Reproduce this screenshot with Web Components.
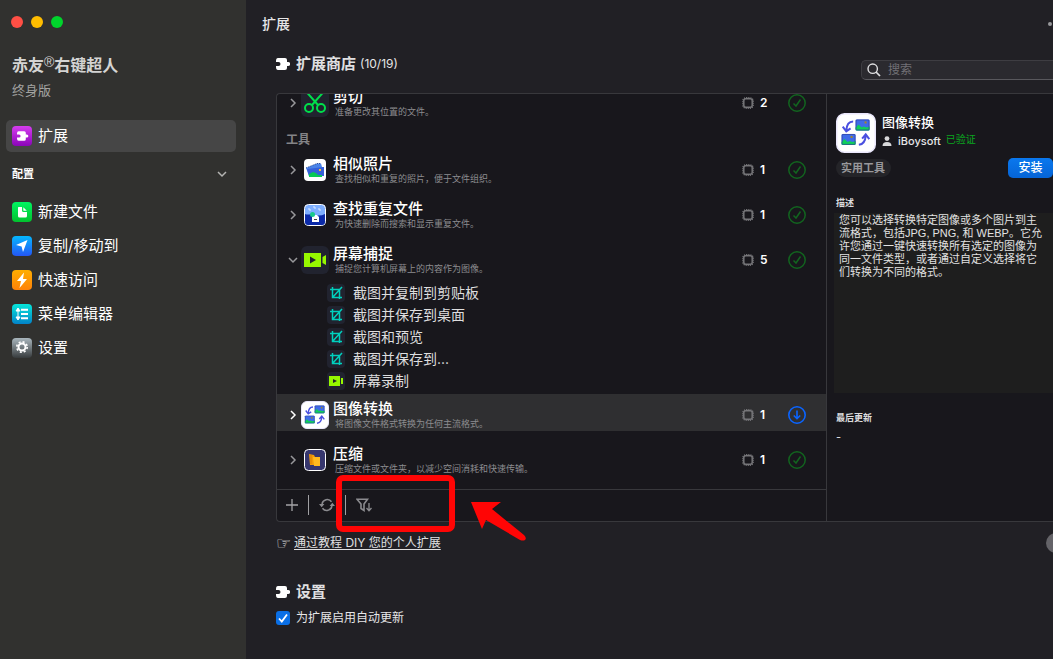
<!DOCTYPE html>
<html lang="zh-CN">
<head>
<meta charset="utf-8">
<title>扩展</title>
<style>
  html, body { margin: 0; height: 100%; }
  body {
    background: #212025;
    color: #e6e6e8;
    font-family: Inter, "Noto Sans CJK SC", sans-serif;
    font-size: 14px;
    overflow: hidden;
  }
</style>
</head>
<body>
<app-window></app-window>
<script>
const define = (name, markup, setup) => {
  const template = document.createElement('template');
  template.innerHTML = markup;
  customElements.define(name, class extends HTMLElement {
    constructor() {
      super();
      this.attachShadow({ mode: 'open' }).append(template.content.cloneNode(true));
    }
    connectedCallback() { if (setup) setup(this, this.shadowRoot); }
  });
};

/* A small landscape photo used inside the image tool icons. */
const photo = (x, y) => `<g transform="translate(${x} ${y})"><rect width="14" height="11" rx="1" fill="#3f6be8"/><path d="M0 8l3-3 3 3 2-1 3 1 3-1v3a1 1 0 0 1-1 1H1a1 1 0 0 1-1-1z" fill="#0fcf5b"/><rect x="9" y="2" width="2" height="2" fill="#a88620"/><rect x=".5" y=".5" width="13" height="10" rx="1" fill="none" stroke="#2f3f9c" stroke-width=".7"/></g>`;
const tile = (id, a, b, art) => ['0 0 20 20', `<defs><linearGradient id="${id}" x2="0" y2="1"><stop stop-color="${a}"/><stop offset="1" stop-color="${b}"/></linearGradient></defs><rect width="20" height="20" rx="4" fill="url(#${id})"/>${art}`];
const puzzle = 'M0 3q0-3 2-3h7q2 0 2 2v2h1.200a2 2 0 0 1 0 4H11v2q0 2-2 2H2q-2 0-2-3V8h2.500a2 2 0 0 0 0-4H0z';

const icons = {
  puzzle: ['0 0 14 12', `<path d="${puzzle}" fill="#fff"/>`],
  extend: tile('g', '#d63df0', '#8a05b8', `<path d="${puzzle}" transform="translate(5 5.200) scale(.8)" fill="#fff"/>`),
  newfile: tile('g', '#00f562', '#02c22e', '<path d="M6.500 5h3.500v3.500q0 1.500 1.500 1.500H15v4q0 1.500-1.500 1.500h-6Q6 15.500 6 14V5.500z" fill="#fff"/><path d="M11.300 5.200L14.800 8.800h-3q-.5 0-.5-.5z" fill="#fff"/>'),
  send: tile('g', '#05b8ff', '#2456f5', '<path d="M15.500 4L11 16 9.600 10.600 4 9z" fill="#fff"/>'),
  bolt: tile('g', '#ffae00', '#ff8208', '<path d="M12 2.500L5 11h4L7.500 18 15 9h-4z" fill="#fff"/>'),
  menu: tile('g', '#06e6da', '#0383c9', '<path d="M9 5.800h7M9 10h7M9 14.200h7" stroke="#fff" stroke-width="2"/><path d="M6 5v10M4 7l2-3 2 3zM4 13l2 3 2-3z" stroke="#fff" fill="#fff"/>'),
  gear: tile('g', '#a9b6bd', '#373b3d', '<circle cx="10" cy="9" r="3.500" fill="none" stroke="#fff" stroke-width="2"/><circle cx="10" cy="9" r="5.200" fill="none" stroke="#fff" stroke-width="1.600" stroke-dasharray="2.040 2.040"/>'),
  right: ['0 0 12 12', '<path d="M4 2l4 4-4 4" fill="none" stroke="currentColor" stroke-width="1.500"/>'],
  down: ['0 0 12 12', '<path d="M2 4l4 4 4-4" fill="none" stroke="currentColor" stroke-width="1.500"/>'],
  scissors: ['0 0 28 28', '<rect width="28" height="28" rx="6" fill="#21232f"/><g fill="none" stroke="#00df4b" stroke-width="2"><circle cx="8" cy="19" r="4"/><circle cx="20" cy="19" r="4"/><path d="M5.500 3l11.500 13M22.500 3L11 16"/></g>'],
  photos: ['0 0 28 28', '<rect x="3" y="3" width="22" height="22" rx="4" fill="#fff"/><path d="M5 12l11-4.500 4 0 1 3.500 2 0v9H8z" fill="#4a83e8"/><path d="M6 13l17-2v9H8z" fill="#3660d8"/><path d="M8 18l4-2 3 1 2 2 4 0v2H8z" fill="#07c954"/><path d="M5 12l11-4.500h4" fill="none" stroke="#1f3f90" stroke-dasharray="1 1"/><rect x="18" y="13" width="2" height="2" fill="#ffc12c"/>'],
  duplicate: ['0 0 28 28', '<rect x="3.500" y="3.500" width="21" height="21" rx="4" fill="#7daeff" stroke="#fff"/><path d="M4 13q3 1 6 0 8 3 14 0v8q0 3-3 3H7q-3 0-3-3z" fill="#0b2aa8"/><path d="M11 14h5l2 2v5h-7z" fill="#fff"/><path d="M13 18.500h3" stroke="#444"/><circle cx="11.500" cy="13.500" r="2.500" fill="#19c88a"/><path d="M8 7v2h2M13 5v2h2M18 7v2h2" fill="none" stroke="#dceaff"/>'],
  video: ['0 0 28 28', '<rect width="28" height="28" rx="6" fill="#21232f"/><path d="M3 7h17v14H3zM21.500 11L25 9v10l-3.500-2z" fill="#96f800"/><path d="M9 10.500l6 3.500-6 3.500z" fill="#21232f"/>'],
  convert: ['0 0 28 28', '<rect x=".5" y=".5" width="27" height="27" rx="5.500" fill="#fff" stroke="#e9e6fb"/><g transform="translate(-.3 .3) scale(.7)">' + photo(20, 6) + photo(6, 20.500) + '</g><g fill="none" stroke="#4a4fe0" stroke-width="1.400"><path d="M12 6q-4.500 0-4.800 6.500M4.700 9.500l2.500 3.300 3-2M16 22.300q4.500-.5 4.800-6.800M18.300 18l2.500-3 2.500 3.300"/></g>'],
  zip: ['0 0 28 28', '<rect x="3.500" y="3.500" width="21" height="21" rx="4" fill="#36366e" stroke="#fff"/><path d="M8 8l5 1 1 2 5 1v8l-4-1H9z" fill="#f29a08"/><path d="M12 11h7v9h-6z" fill="#ffb91f"/><path d="M10 9v9" stroke="#d97e00"/>'],
  crop: ['0 0 18 18', '<rect width="18" height="18" rx="4" fill="#21232f"/><path d="M5.500 3v10.500H15M3 5.500h9.500V15M5.500 13.500L15 3" fill="none" stroke="#00d0bd" stroke-width="1.500"/>'],
  clip: ['0 0 18 18', '<rect width="18" height="18" rx="4" fill="#21232f"/><path d="M2 4h11v10H2zM14 6h2v6h-2z" fill="#96f800"/><path d="M6 7l4 2-4 2z" fill="#21232f"/>'],
  chip: ['0 0 12 12', '<rect x="1.800" y="1.800" width="8.400" height="8.400" rx="2" fill="none" stroke="#77777a" stroke-width="1.500"/><rect x=".7" y=".7" width="10.600" height="10.600" rx="3.500" fill="none" stroke="#77777a" stroke-width="1.200" stroke-dasharray="1.100 1"/>'],
  done: ['0 0 18 18', '<g fill="none" stroke="#12641f" stroke-width="1.500"><circle cx="9" cy="9" r="8.200"/><path d="M5.500 9.500L8 12l4.500-6.500"/></g>'],
  get: ['0 0 18 18', '<g fill="none" stroke="#0a64ff" stroke-width="1.600"><circle cx="9" cy="9" r="8.200"/><path d="M9 4.500v8M5.800 9.500L9 12.700l3.200-3.200"/></g>'],
  plus: ['0 0 12 12', '<path d="M6 0v12M0 6h12" stroke="#a4a4a7" stroke-width="1.300"/>'],
  refresh: ['0 0 16 14', '<g fill="none" stroke="#8b8b8f" stroke-width="1.500"><path d="M3 6a5.300 5.300 0 0 1 9.500-2.200M13 8a5.300 5.300 0 0 1-9.500 2.200"/></g><path d="M0 6h5.400L2.700 9.300zM10.600 8H16l-2.700-3.300z" fill="#8b8b8f"/>'],
  filter: ['0 0 17 14', '<path d="M1 1.200h10.500L8 6v6.500L5 10.500V6z" fill="none" stroke="#8b8b8f" stroke-width="1.600"/><path d="M13 5v7.500M10.500 10l2.500 2.700 2.500-2.700" fill="none" stroke="#8b8b8f" stroke-width="1.300"/>'],
  search: ['0 0 14 14', '<circle cx="5.700" cy="5.700" r="4.700" fill="none" stroke="#e0e0e2" stroke-width="1.400"/><path d="M9 9l4 4" stroke="#e0e0e2" stroke-width="1.700"/>'],
  person: ['0 0 10 10', '<circle cx="5" cy="2.600" r="2.400" fill="#d8d8da"/><path d="M.5 10q0-4 4.500-4t4.500 4z" fill="#d8d8da"/>'],
  dots: ['0 0 16 4', '<g fill="#98989b"><circle cx="2" cy="2" r="2"/><circle cx="8" cy="2" r="2"/><circle cx="14" cy="2" r="2"/></g>']
};

class UiIcon extends HTMLElement {
  constructor() { super(); this.attachShadow({ mode: 'open' }); }
  connectedCallback() {
    const [box, art] = icons[this.getAttribute('name')];
    const [, , w, h] = box.split(' ');
    const width = this.getAttribute('width') || w;
    this.shadowRoot.innerHTML = `<style>:host{display:block;flex:none}svg{display:block}</style>
      <svg width="${width}" height="${width * h / w}" viewBox="${box}" aria-hidden="true">${art}</svg>`;
  }
}
customElements.define('ui-icon', UiIcon);

const iconMarkup = name => `<ui-icon name="${name}"></ui-icon>`;

define('nav-item', `
<style>
  :host { display: block; }
  a {
    display: flex; align-items: center; gap: 6px;
    height: 34px; padding: 0 6px; border-radius: 5px;
    color: #fff; font-size: 15px; line-height: 20px; text-decoration: none;
  }
  :host([selected]) a { height: 32px; background: #464646; }
</style>
<a href="#"><span class="icon"></span><slot></slot></a>`,
(host, root) => {
  root.querySelector('.icon').innerHTML = iconMarkup(host.getAttribute('icon'));
  if (host.hasAttribute('selected')) root.querySelector('a').setAttribute('aria-current', 'page');
});

define('side-bar', `
<style>
  :host { display: block; box-sizing: border-box; flex: none; width: 246px; padding: 16px 10px 0 6px; background: #31312f; }
  .lights { display: flex; gap: 8px; padding-left: 5px; }
  .lights button { width: 12px; height: 12px; padding: 0; border: 0; border-radius: 50%; }
  h1 { margin: 26px 0 0 6px; font-size: 16px; line-height: 22px; font-weight: bold; color: #d4d4d3; }
  sup { font-size: 14px; line-height: 0; vertical-align: 4px; font-family: "Liberation Sans", sans-serif; font-weight: normal; }
  .plan { margin: 4px 0 20px 6px; font-size: 13px; line-height: 20px; color: #a3a3a1; }
  .group {
    display: flex; align-items: center; justify-content: space-between; width: 100%;
    height: 43px; padding: 0 8px 0 6px; border: 0; background: none;
    font: bold 11px/16px Inter, "Noto Sans CJK SC", sans-serif; color: #fff;
  }
  .group ui-icon { color: #b4b4b2; }
</style>
<div class="lights">
  <button aria-label="关闭" style="background:#ff4f45"></button>
  <button aria-label="最小化" style="background:#ffbd00"></button>
  <button aria-label="缩放" style="background:#00d42c"></button>
</div>
<h1>赤友<sup>®</sup>右键超人</h1>
<p class="plan">终身版</p>
<nav>
  <nav-item icon="extend" selected>扩展</nav-item>
  <button class="group">配置 <ui-icon name="down"></ui-icon></button>
  <nav-item icon="newfile">新建文件</nav-item>
  <nav-item icon="send">复制/移动到</nav-item>
  <nav-item icon="bolt">快速访问</nav-item>
  <nav-item icon="menu">菜单编辑器</nav-item>
  <nav-item icon="gear">设置</nav-item>
</nav>`);

define('ext-row', `
<style>
  :host {
    display: grid; grid-template-columns: 16px 28px minmax(0, 1fr) 46px 18px; align-items: center;
    flex: none; box-sizing: border-box; height: 37px; padding: 5px 20px 0 8px; margin-bottom: 8px;
    white-space: nowrap;
  }
  :host([selected]) { background: #2f2f31; }
  .toggle { padding: 0 0 0 2px; border: 0; background: none; color: #98989b; }
  :host([selected]) .toggle { color: #fff; }
  .text { padding-left: 4px; }
  .name { font-size: 15px; line-height: 18px; font-weight: 500; color: #fff; }
  .note { padding-left: 2px; font-size: 9px; line-height: 12px; color: #8c8c8f; }
  .count { display: flex; align-items: center; gap: 6px; font-size: 12px; line-height: 16px; font-weight: 600; color: #fff; }
</style>
<button class="toggle" aria-label="展开"></button>
<span class="icon"></span>
<div class="text"><div class="name"><slot></slot></div><div class="note"><slot name="note"></slot></div></div>
<div class="count"><ui-icon name="chip"></ui-icon><slot name="count"></slot></div>
<span class="state"></span>`,
(host, root) => {
  root.querySelector('.toggle').innerHTML = iconMarkup(host.hasAttribute('open') ? 'down' : 'right');
  root.querySelector('.icon').innerHTML = iconMarkup(host.getAttribute('icon'));
  root.querySelector('.state').innerHTML = iconMarkup(host.hasAttribute('selected') ? 'get' : 'done');
});

define('ext-action', `
<style>
  :host { display: flex; flex: none; align-items: center; gap: 8px; height: 22px; padding-left: 50px; font-size: 14px; line-height: 22px; color: #dededf; }
</style>
<span class="icon"></span><slot></slot>`,
(host, root) => { root.querySelector('.icon').innerHTML = iconMarkup(host.getAttribute('icon')); });

define('ext-list', `
<style>
  :host { display: flex; flex: 1; flex-direction: column; justify-content: flex-end; min-height: 0; overflow: hidden; padding-bottom: 5px; }
  h3 { flex: none; margin: 4px 0 0 9px; font-size: 12px; line-height: 18px; font-weight: bold; color: #848487; }
  .actions { flex: none; margin: -2px 0 2px; }
</style>
<ext-row icon="scissors">剪切<span slot="note">准备更改其位置的文件。</span><span slot="count">2</span></ext-row>
<h3>工具</h3>
<ext-row icon="photos">相似照片<span slot="note">查找相似和重复的照片，便于文件组织。</span><span slot="count">1</span></ext-row>
<ext-row icon="duplicate">查找重复文件<span slot="note">为快速删除而搜索和显示重复文件。</span><span slot="count">1</span></ext-row>
<ext-row icon="video" open>屏幕捕捉<span slot="note">捕捉您计算机屏幕上的内容作为图像。</span><span slot="count">5</span></ext-row>
<div class="actions">
  <ext-action icon="crop">截图并复制到剪贴板</ext-action>
  <ext-action icon="crop">截图并保存到桌面</ext-action>
  <ext-action icon="crop">截图和预览</ext-action>
  <ext-action icon="crop">截图并保存到...</ext-action>
  <ext-action icon="clip">屏幕录制</ext-action>
</div>
<ext-row icon="convert" selected>图像转换<span slot="note">将图像文件格式转换为任何主流格式。</span><span slot="count">1</span></ext-row>
<ext-row icon="zip">压缩<span slot="note">压缩文件或文件夹，以减少空间消耗和快速传输。</span><span slot="count">1</span></ext-row>`);

define('list-toolbar', `
<style>
  :host { position: relative; display: flex; flex: none; align-items: center; height: 29px; padding: 0 0 2px 9px; border-top: 1px solid #38383c; }
  button { display: flex; padding: 0; border: 0; background: none; }
  i { width: 1px; height: 20px; margin: 0 10px; background: #a0a0a3; }
  .mark { position: absolute; left: 59px; top: -15px; }
</style>
<button aria-label="添加"><ui-icon name="plus"></ui-icon></button><i></i>
<button aria-label="刷新"><ui-icon name="refresh"></ui-icon></button><i></i>
<button aria-label="筛选"><ui-icon name="filter"></ui-icon></button>
<svg class="mark" width="194" height="70" viewBox="0 0 194 70" aria-hidden="true">
  <rect x="3" y="3" width="113" height="51" rx="4" fill="none" stroke="#ff0505" stroke-width="6"/>
  <path d="M135 27h30l-9 7 32 26q3 3 1 5-2 1-5 0L150 45l-4 9z" fill="#ff0505"/>
</svg>`);

define('ext-detail', `
<style>
  :host { display: flex; flex: none; flex-direction: column; box-sizing: border-box; width: 227px; padding: 19px 0 0 9px; border-left: 1px solid #38383c; }
  .head { display: flex; gap: 6px; }
  h2 { margin: 0; font-size: 13px; line-height: 18px; font-weight: 500; color: #fff; }
  .by { display: flex; align-items: center; gap: 6px; font-size: 11px; line-height: 20px; font-weight: 500; }
  .verified { align-self: flex-start; margin-left: -1px; font-size: 10px; line-height: 16px; font-weight: 400; color: #0aa51f; }
  .line { display: flex; align-items: center; justify-content: space-between; margin-top: 5px; }
  .tag { padding: 0 6px 0 5px; border-radius: 9px; background: #242428; font-size: 11px; line-height: 18px; font-weight: bold; color: #98989b; }
  .line button { width: 45px; height: 20px; padding: 0; border: 0; border-radius: 5px; background: linear-gradient(#0a78ee, #0564d6); font: 500 12px/20px Inter, "Noto Sans CJK SC", sans-serif; color: #fff; }
  h3 { margin: 18px 0 3px; font-size: 9px; line-height: 14px; font-weight: bold; color: #dcdcde; }
  .about { height: 180px; margin: 0 0 0 -2px; padding: 1px 6px 0 5px; box-sizing: border-box; background: #1e1e1e; font: 11px/13px "Liberation Sans", "Noto Sans CJK SC", sans-serif; color: #e2e2e2; }
  .date { font-size: 11px; line-height: 18px; }
</style>
<div class="head">
  <ui-icon name="convert" width="40"></ui-icon>
  <div><h2>图像转换</h2><div class="by"><ui-icon name="person"></ui-icon>iBoysoft<span class="verified">已验证</span></div></div>
</div>
<div class="line"><span class="tag">实用工具</span><button>安装</button></div>
<h3>描述</h3>
<p class="about">您可以选择转换特定图像或多个图片到主流格式，包括JPG, PNG, 和 WEBP。它允许您通过一键快速转换所有选定的图像为同一文件类型，或者通过自定义选择将它们转换为不同的格式。</p>
<h3>最后更新</h3>
<div class="date">-</div>`);

define('section-title', `
<style>
  :host { display: flex; align-items: center; gap: 4px; height: 20px; font-size: 12px; line-height: 20px; }
  h2 { margin: 0 0 0 2px; font-size: 15px; line-height: 20px; font-weight: bold; color: #e0e0e2; }
</style>
<ui-icon name="puzzle"></ui-icon><h2><slot></slot></h2><slot name="extra"></slot>`);

define('app-window', `
<style>
  :host { display: flex; height: 100vh; min-height: 600px; }
  main { display: flex; flex: 1; flex-direction: column; min-width: 0; overflow: hidden; background: #212025; }
  header { display: flex; flex: none; align-items: center; justify-content: space-between; height: 48px; padding-left: 16px; }
  h1 { margin: 0; font-size: 14px; line-height: 20px; font-weight: 500; }
  .more { display: flex; margin-right: -11px; padding: 0; border: 0; background: none; }
  .body { display: flex; flex: 1; flex-direction: column; min-height: 0; padding: 6px 0 31px 30px; }
  .top { display: flex; flex: none; justify-content: space-between; height: 39px; }
  .search { display: flex; align-items: center; gap: 7px; box-sizing: border-box; width: 192px; height: 20px; margin-top: 6px; padding-left: 5px; border: 1px solid #3e3d42; border-bottom-color: #59585d; border-right: 0; border-radius: 5px 0 0 5px; background: #2b2a2f; }
  input[type=search] { flex: 1; min-width: 0; padding: 0; border: 0; outline: 0; background: none; font: 12px/18px Inter, "Noto Sans CJK SC", sans-serif; color: #fff; }
  input::placeholder { color: #717075; opacity: 1; }
  .panel { display: flex; flex: 1; min-height: 0; border: 1px solid #38383c; border-right: 0; border-radius: 4px 0 0 4px; background: #18171c; }
  .left { display: flex; flex: 1; flex-direction: column; min-width: 0; }
  .foot { display: flex; flex: none; align-items: center; gap: 4px; height: 20px; margin: 11px 0 29px; font-size: 12px; line-height: 20px; }
  .hand { width: 14px; font: 17px/20px "DejaVu Sans", sans-serif; }
  .foot a { color: #e0e0e2; text-underline-offset: 2px; }
  .help { width: 20px; height: 20px; margin: 0 -13px 0 auto; padding: 0; border: 0; border-radius: 50%; background: #646368; }
  label { display: flex; flex: none; align-items: center; gap: 6px; margin-top: 6px; font-size: 12px; line-height: 20px; }
  input[type=checkbox] {
    appearance: none; width: 14px; height: 14px; margin: 0; border-radius: 3px;
    background: #0a6fe6 url("data:image/svg+xml,%3Csvg xmlns='http://www.w3.org/2000/svg' viewBox='0 0 14 14'%3E%3Cpath d='M3 7.500l2.800 3L11 3.500' fill='none' stroke='white' stroke-width='1.800'/%3E%3C/svg%3E");
  }
</style>
<side-bar></side-bar>
<main>
  <header><h1>扩展</h1><button class="more" aria-label="更多"><ui-icon name="dots"></ui-icon></button></header>
  <div class="body">
    <div class="top">
      <section-title>扩展商店<span slot="extra">(10/19)</span></section-title>
      <div class="search"><ui-icon name="search"></ui-icon><input type="search" placeholder="搜索" aria-label="搜索"></div>
    </div>
    <div class="panel">
      <div class="left"><ext-list></ext-list><list-toolbar></list-toolbar></div>
      <ext-detail></ext-detail>
    </div>
    <div class="foot"><span class="hand">☞</span><a href="#">通过教程 DIY 您的个人扩展</a><button class="help" aria-label="帮助"></button></div>
    <section-title>设置</section-title>
    <label><input type="checkbox" checked>为扩展启用自动更新</label>
  </div>
</main>`);
</script>
</body>
</html>
